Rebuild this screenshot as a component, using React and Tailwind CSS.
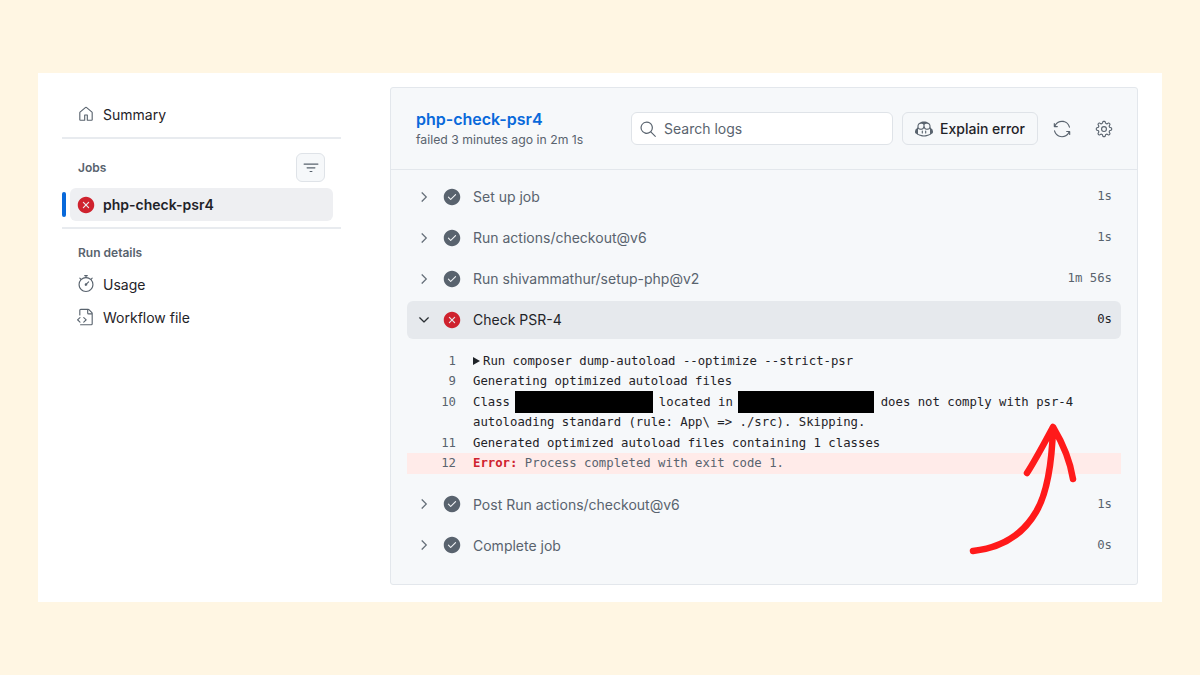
import {
  GoHome, GoFilter, GoXCircleFill, GoStopwatch, GoFileCode, GoCheckCircleFill,
  GoChevronRight, GoChevronDown, GoSearch, GoSync, GoGear, GoCopilot,
} from 'react-icons/go';

const ui = { fontFamily: 'Inter, "Liberation Sans", sans-serif' };
const mono = { fontFamily: '"DejaVu Sans Mono", "Liberation Mono", monospace' };

function Step({ name, time }) {
  return (
    <div className="flex items-center h-[38px] mb-[3px] pl-[9px] pr-[9px]">
      <GoChevronRight className="w-[16px] h-[16px] text-[#59636e]" strokeWidth={0.5} />
      <GoCheckCircleFill className="w-[18px] h-[18px] ml-[11px] text-[#59636e]" />
      <span className="ml-[12px] text-[14px] text-[#59636e]">{name}</span>
      <span className="ml-auto text-[12.3px] text-[#59636e]" style={mono}>{time}</span>
    </div>
  );
}

function LogLine({ n, children, className = '' }) {
  return (
    <div className={`flex leading-[20.5px] text-[12.3px] text-[#1f2328] ${className}`} style={mono}>
      <span className="w-[49px] shrink-0 text-right text-[#59636e]">{n}</span>
      <span className="ml-[17px] whitespace-pre">{children}</span>
    </div>
  );
}

function Redacted({ className }) {
  return <span className={`inline-block h-[22px] -my-[1px] bg-black align-top ${className}`} />;
}

export default function App() {
  return (
    <div className="relative h-[675px] bg-[#fff6e3] px-[38px] py-[73px]" style={ui}>
      <div className="flex h-[529px] bg-white pl-[24px] pt-[14px]">
        {/* sidebar */}
        <aside className="w-[279px] shrink-0 mt-[13px] text-[14px] text-[#1f2328]">
          <div className="flex items-center h-[28px] pl-[15px]">
            <GoHome className="w-[18px] h-[18px] text-[#59636e]" />
            <span className="ml-[8px]">Summary</span>
          </div>
          <div className="mt-[9px] h-[2px] bg-[#e8ebef]" />
          <div className="flex items-center justify-between h-[29px] mt-[14px] pl-[16px] pr-[16px]">
            <span className="text-[12px] font-semibold text-[#59636e]">Jobs</span>
            <button className="flex items-center justify-center w-[29px] h-[29px] rounded-[6px] border border-[#dfe3e8] bg-[#f6f8fa]">
              <GoFilter className="w-[18px] h-[18px] text-[#59636e]" />
            </button>
          </div>
          <div className="flex items-center mt-[6px] h-[33px]">
            <div className="w-[4px] h-[25px] rounded-full bg-[#0969da]" />
            <div className="flex items-center flex-1 h-[33px] ml-[4px] mr-[8px] pl-[7px] rounded-[6px] bg-[#eeeff2]">
              <GoXCircleFill className="w-[18px] h-[18px] text-[#cf222e]" />
              <span className="ml-[8px] font-semibold">php-check-psr4</span>
            </div>
          </div>
          <div className="mt-[6px] h-[2px] bg-[#e8ebef]" />
          <div className="mt-[16px] pl-[16px] h-[16px] leading-[16px] text-[12px] font-semibold text-[#59636e]">Run details</div>
          <div className="flex items-center h-[28px] mt-[9px] pl-[15px]">
            <GoStopwatch className="w-[18px] h-[18px] text-[#59636e]" />
            <span className="ml-[8px]">Usage</span>
          </div>
          <div className="flex items-center h-[28px] mt-[5px] pl-[15px]">
            <GoFileCode className="w-[18px] h-[18px] text-[#59636e]" />
            <span className="ml-[8px]">Workflow file</span>
          </div>
        </aside>

        {/* job log panel */}
        <main className="ml-[49px] w-[748px] h-[498px] rounded-[3px] border border-[#e3e7ec] bg-[#f6f8fa]">
          <header className="flex items-center h-[82px] pl-[25px] pr-[24px] border-b border-[#e3e7ec]">
            <div className="w-[215px] shrink-0">
              <div className="text-[16px] font-semibold leading-[20px] text-[#0969da]">php-check-psr4</div>
              <div className="mt-[3px] text-[12.25px] leading-[16px] text-[#59636e]">failed 3 minutes ago in 2m 1s</div>
            </div>
            <div className="flex items-center w-[262px] h-[33px] pl-[7px] rounded-[6px] border border-[#dfe3e8] bg-white">
              <GoSearch className="w-[18px] h-[18px] text-[#59636e]" />
              <span className="ml-[7px] text-[14px] text-[#59636e]">Search logs</span>
            </div>
            <button className="flex items-center justify-center gap-[7px] w-[136px] h-[33px] ml-[9px] rounded-[6px] border border-[#dfe3e8] bg-[#f6f8fa] text-[14px] font-medium text-[#1f2328]">
              <GoCopilot className="w-[18px] h-[18px] text-[#59636e]" />
              Explain error
            </button>
            <GoSync className="w-[18px] h-[18px] ml-[15px] text-[#59636e]" />
            <GoGear className="w-[18px] h-[18px] ml-[24px] text-[#59636e]" />
          </header>

          <div className="pl-[16px] pr-[16px] pt-[7.5px]">
            <Step name="Set up job" time="1s" />
            <Step name="Run actions/checkout@v6" time="1s" />
            <Step name="Run shivammathur/setup-php@v2" time="1m 56s" />
            <div className="flex items-center h-[38px] mt-[0.5px] pl-[9px] pr-[9px] rounded-[6px] bg-[#e6e9ed]">
              <GoChevronDown className="w-[16px] h-[16px] text-[#1f2328]" strokeWidth={0.5} />
              <GoXCircleFill className="w-[18px] h-[18px] ml-[11px] text-[#cf222e]" />
              <span className="ml-[12px] text-[14px] text-[#1f2328]">Check PSR-4</span>
              <span className="ml-auto text-[12.3px] text-[#1f2328]" style={mono}>0s</span>
            </div>

            <div className="pt-[12px] pb-[11.5px]">
              <LogLine n="1">
                <span className="inline-block mr-[3px] w-0 h-0 border-y-[4px] border-y-transparent border-l-[7px] border-l-[#1f2328]" />
                Run composer dump-autoload --optimize --strict-psr
              </LogLine>
              <LogLine n="9">Generating optimized autoload files</LogLine>
              <LogLine n="10">
                Class <Redacted className="w-[138px] -ml-[2px] -mr-[2px]" /> located in <Redacted className="w-[136px] -ml-[2px] -mr-[1px]" /> does not comply with psr-4{'\n'}autoloading standard (rule: App\ =&gt; ./src). Skipping.
              </LogLine>
              <LogLine n="11">Generated optimized autoload files containing 1 classes</LogLine>
              <LogLine n="12" className="bg-[#ffebe9]">
                <span className="font-bold text-[#cf222e]">Error:</span>
                <span className="text-[#59636e]"> Process completed with exit code 1.</span>
              </LogLine>
            </div>

            <Step name="Post Run actions/checkout@v6" time="1s" />
            <Step name="Complete job" time="0s" />
          </div>
        </main>
      </div>

      {/* hand drawn arrow over the screenshot */}
      <svg className="absolute left-0 top-0 pointer-events-none" width="1200" height="675" fill="none">
        <path
          d="M973 551 C1000 548 1022 536 1036 512 C1048 492 1052 460 1053 428 M1027 473 C1036 459 1046 440 1053 427 C1062 442 1070 460 1073 479"
          stroke="#ff1a1a"
          strokeWidth="6.5"
          strokeLinecap="round"
          strokeLinejoin="round"
        />
      </svg>
    </div>
  );
}
